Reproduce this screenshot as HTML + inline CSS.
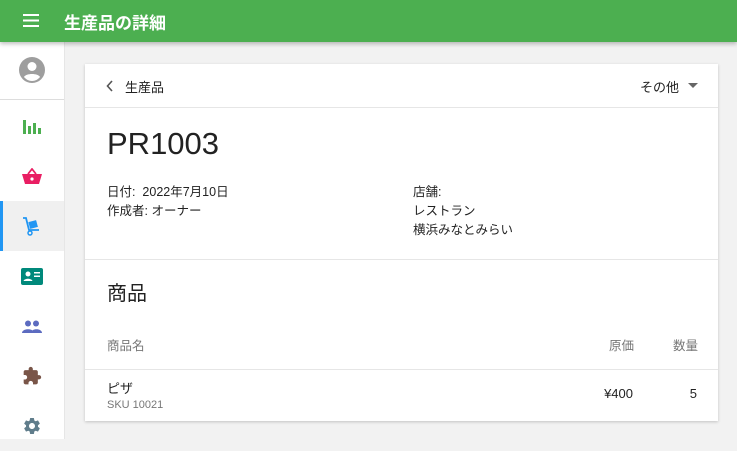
<!DOCTYPE html><html><head><meta charset="utf-8"><style>
body{margin:0;width:737px;height:439px;overflow:hidden;background:#f2f2f2;font-family:"Liberation Sans","Noto Sans CJK JP",sans-serif;color:#222;position:relative}
.top{position:absolute;left:0;top:0;width:737px;height:42px;background:#4caf50;box-shadow:0 2px 4px rgba(0,0,0,.25);z-index:2}
.top .t{position:absolute;left:64px;top:9px;color:#fff;font-size:17px;font-weight:bold}
.side{position:absolute;left:0;top:42px;width:64px;height:397px;background:#fff;border-right:1px solid #e6e6e6}
.ic{position:absolute;left:0;width:64px;height:50px;display:flex;align-items:center;justify-content:center}
.card{position:absolute;left:85px;top:64px;width:633px;height:357px;background:#fff;box-shadow:0 1px 3px rgba(0,0,0,.2)}
.a{position:absolute;white-space:nowrap}
.r{position:absolute;white-space:nowrap;text-align:right}
.hr{position:absolute;left:0;width:633px;height:1px;background:#e6e6e6}
</style></head><body>
<div class="top"><svg style="position:absolute;left:23px;top:14px" width="16" height="13"><rect y="0" width="16" height="2" fill="#fff"/><rect y="5.5" width="16" height="2" fill="#fff"/><rect y="11" width="16" height="2" fill="#fff"/></svg><div class="t">生産品の詳細</div></div>
<div class="side">
<div class="ic" style="top:3px;height:50px"><svg width="28" height="28" viewBox="0 0 28 28"><circle cx="14" cy="14" r="13" fill="#9e9e9e"/><circle cx="14" cy="10.5" r="4.5" fill="#fff"/><path d="M6 21c2-4 14-4 16 0c-2 2.5-5 4-8 4s-6-1.5-8-4z" fill="#fff"/></svg></div>
<div style="position:absolute;left:0;top:57px;width:64px;height:1px;background:#ddd"></div>
<div class="ic" style="top:59px"><svg width="18" height="16"><g fill="#4caf50"><rect x="0" y="2" width="3" height="14"/><rect x="5" y="8" width="3" height="8"/><rect x="10" y="5" width="3" height="11"/><rect x="15" y="10" width="3" height="6"/></g></svg></div>
<div class="ic" style="top:109px"><svg width="20" height="16" viewBox="0 0 20 16"><path d="M6 6L10 1L14 6" stroke="#e91e63" stroke-width="1.8" fill="none"/><path d="M0 6h20l-3 10H3z" fill="#e91e63"/><circle cx="10" cy="11" r="1.6" fill="#fff"/></svg></div>
<div class="ic" style="top:159px;background:#f0f0f0;border-left:3px solid #2196f3;box-sizing:border-box;padding-right:3px"><svg width="20" height="20" viewBox="0 0 20 20"><path d="M1 2h3l3 12h10" stroke="#2196f3" stroke-width="1.8" fill="none"/><rect x="7" y="5" width="8" height="7" fill="#2196f3" transform="rotate(-15 11 8)"/><circle cx="8" cy="17" r="2" stroke="#2196f3" stroke-width="1.5" fill="none"/></svg></div>
<div class="ic" style="top:209px"><svg width="22" height="17"><rect width="22" height="17" rx="2" fill="#00897b"/><circle cx="7" cy="6" r="2.5" fill="#fff"/><path d="M2.5 13c1-3 8-3 9 0z" fill="#fff"/><rect x="13" y="4" width="6" height="1.5" fill="#fff"/><rect x="13" y="7.5" width="6" height="1.5" fill="#fff"/></svg></div>
<div class="ic" style="top:259px"><svg width="20" height="13"><g fill="#5c6bc0"><circle cx="6" cy="3.5" r="3"/><circle cx="14" cy="3.5" r="3"/><path d="M0 13c0-5 12-5 12 0z"/><path d="M9 13c0-5 11-5 11 0z"/></g></svg></div>
<div class="ic" style="top:309px"><svg width="20" height="20" viewBox="0 0 24 24"><path fill="#795548" d="M20.5 11H19V7c0-1.1-.9-2-2-2h-4V3.5C13 2.12 11.880 1 10.5 1S8 2.12 8 3.5V5H4c-1.1 0-1.99.9-1.99 2v3.8H3.5c1.49 0 2.7 1.21 2.7 2.7s-1.21 2.7-2.7 2.7H2V20c0 1.1.9 2 2 2h3.8v-1.5c0-1.490 1.21-2.7 2.7-2.7 1.49 0 2.7 1.21 2.7 2.7V22H17c1.1 0 2-.9 2-2v-4h1.5c1.38 0 2.5-1.12 2.5-2.5S21.88 11 20.5 11z"/></svg></div>
<div class="ic" style="top:359px"><svg width="20" height="20" viewBox="0 0 24 24"><path fill="#607d8b" d="M19.14 12.94c.04-.3.06-.61.06-.94s-.02-.64-.07-.94l2.03-1.58a.49.49 0 00.12-.61l-1.92-3.32a.49.49 0 00-.59-.22l-2.39.96c-.5-.38-1.03-.7-1.62-.94l-.36-2.54a.48.48 0 00-.48-.41h-3.840c-.24 0-.43.17-.47.41l-.36 2.54c-.59.24-1.13.57-1.62.94l-2.39-.96a.48.48 0 00-.59.22L2.74 8.87c-.12.21-.08.47.12.61l2.03 1.58c-.05.3-.09.63-.09.94s.02.64.07.94l-2.03 1.58a.49.49 0 00-.12.61l1.92 3.32c.12.22.37.29.59.22l2.39-.96c.5.38 1.03.7 1.62.94l.36 2.54c.05.24.24.41.48.41h3.84c.24 0 .44-.17.47-.41l.36-2.54c.59-.24 1.13-.56 1.62-.94l2.39.96c.22.08.47 0 .59-.22l1.92-3.32c.12-.22.07-.47-.12-.61l-2.01-1.58zM12 15.6c-1.98 0-3.6-1.62-3.6-3.6s1.62-3.6 3.6-3.6 3.6 1.62 3.6 3.6-1.62 3.6-3.6 3.6z"/></svg></div>
</div>
<div class="card">
<svg class="a" style="left:21px;top:16px" width="8" height="12"><path d="M6 1L1.5 6L6 11" stroke="#555" stroke-width="1.6" fill="none"/></svg>
<div class="a" style="left:40px;top:13px;font-size:13px">生産品</div>
<div class="a" style="left:555px;top:13px;font-size:13px">その他</div>
<svg class="a" style="left:603px;top:19px" width="10" height="6"><path d="M0 0h10L5 5z" fill="#666"/></svg>
<div class="hr" style="top:43px"></div>
<div class="a" style="left:22px;top:62px;font-size:31px;color:#222">PR1003</div>
<div class="a" style="left:22px;top:119px;font-size:12.5px;line-height:19px">日付:&nbsp; 2022年7月10日<br>作成者: オーナー</div>
<div class="a" style="left:328px;top:119px;font-size:12.5px;line-height:19px">店舗:<br>レストラン<br>横浜みなとみらい</div>
<div class="hr" style="top:195px"></div>
<div class="a" style="left:22px;top:213px;font-size:20px">商品</div>
<div class="a" style="left:22px;top:271px;font-size:12.5px;color:#777">商品名</div>
<div class="r" style="right:84px;top:271px;font-size:12.5px;color:#777">原価</div>
<div class="r" style="right:20px;top:271px;font-size:12.5px;color:#777">数量</div>
<div class="hr" style="top:305px"></div>
<div class="a" style="left:22px;top:314px;font-size:13px">ピザ</div>
<div class="a" style="left:22px;top:335px;font-size:11px;color:#777">SKU 10021</div>
<div class="r" style="right:85px;top:322px;font-size:13px">¥400</div>
<div class="r" style="right:21px;top:322px;font-size:13px">5</div>
</div>
</body></html>
